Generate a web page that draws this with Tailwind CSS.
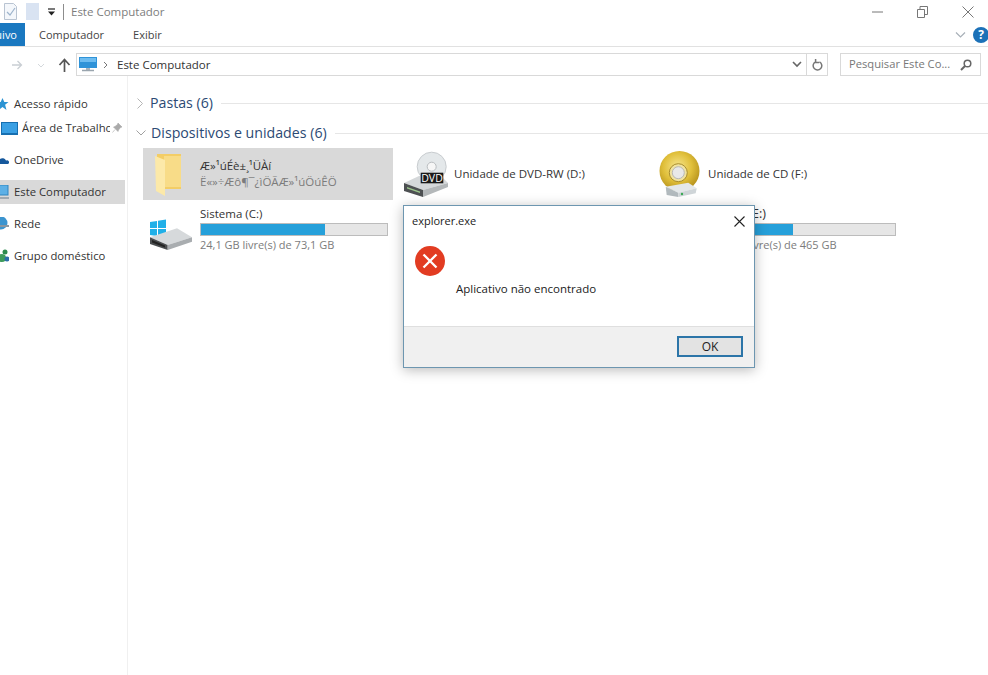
<!DOCTYPE html>
<html lang="pt">
<head>
  <meta charset="UTF-8"/>
  <meta name="viewport" content="width=device-width, initial-scale=1.0"/>
  <title>Este Computador</title>
  <script src="https://cdn.jsdelivr.net/npm/@tailwindcss/browser@4"></script>
</head>
<body class="relative h-[675px] w-[988px] overflow-hidden bg-white font-['Open_Sans',sans-serif] text-[11.5px] text-[#333]">

  <!-- title bar -->
  <header class="flex h-[23px] items-center">
    <svg class="ml-[4px] h-[17px] w-[13px]" viewBox="0 0 13 17"><path d="M.5.500h9l3 3v13H.5z" fill="#f4f7fb" stroke="#b9c4d2"/><path d="M3 9l3 3 5-7" fill="none" stroke="#9db4cc" stroke-width="1.200"/></svg>
    <div class="ml-[9px] h-[17px] w-[13px] bg-[#d9e3f2]"></div>
    <svg class="ml-[8px] h-[8px] w-[9px]" viewBox="0 0 9 8"><path d="M1 1h7" stroke="#222" stroke-width="1.200"/><path d="M1 3.500h7L4.500 7.500z" fill="#222"/></svg>
    <div class="ml-[7px] h-[16px] w-px bg-[#8d8d8d]"></div>
    <span class="ml-[7px] text-[#7d7d7d]">Este Computador</span>
    <div class="ml-auto flex h-full items-center">
      <svg class="h-[12px] w-[12px]" viewBox="0 0 12 12"><path d="M0 6h11" stroke="#777"/></svg>
      <svg class="ml-[33px] h-[12px] w-[12px]" viewBox="0 0 12 12"><path d="M.5 3.500h7v8h-7zM3 3.500v-3h7.500v8h-3" fill="none" stroke="#777"/></svg>
      <svg class="ml-[33px] mr-[14px] h-[12px] w-[12px]" viewBox="0 0 12 12"><path d="M.5.500l11 11M11.500.500l-11 11" stroke="#777"/></svg>
    </div>
  </header>

  <!-- ribbon tabs -->
  <nav class="flex h-[24px] items-center border-b border-[#e1e1e1] text-[11px]">
    <div class="flex h-[23px] w-[25px] items-center justify-end overflow-hidden bg-[#1a78c0] pr-[8px] pt-px text-white">
      <span class="shrink-0">Arquivo</span>
    </div>
    <span class="ml-[14px] pt-px text-[#444]">Computador</span>
    <span class="ml-[29px] pt-px text-[#444]">Exibir</span>
    <svg class="ml-auto h-[8px] w-[11px]" viewBox="0 0 11 8"><path d="M1 1.500l4.500 4.500L10 1.500" fill="none" stroke="#a8b0b8" stroke-width="1.200"/></svg>
    <div class="ml-[7px] mr-[-1px] flex h-[16px] w-[16px] items-center justify-center rounded-full bg-[#1c71b8] text-[12px] font-bold text-white">?</div>
  </nav>

  <!-- address row -->
  <div class="flex h-[29px] items-end">
    <svg class="mb-[5px] ml-[11px] h-[12px] w-[12px]" viewBox="0 0 12 12"><path d="M1 6h9M6.500 2l4 4-4 4" fill="none" stroke="#c9ced3" stroke-width="1.300"/></svg>
    <svg class="mb-[8px] ml-[14px] h-[5px] w-[8px]" viewBox="0 0 8 5"><path d="M1 1l3 3 3-3" fill="none" stroke="#d4d8dc"/></svg>
    <svg class="mb-[4px] ml-[13px] h-[14px] w-[13px]" viewBox="0 0 13 14"><path d="M6.500 14V2M1.500 7l5-5.500 5 5.500" fill="none" stroke="#555" stroke-width="1.700"/></svg>
    <div class="ml-[5px] flex h-[23px] w-[752px] items-center border border-[#d9d9d9]">
      <svg class="ml-[2px] h-[17px] w-[18px]" viewBox="0 0 18 17"><rect x="0" y="1" width="18" height="11" fill="#2f93d8"/><rect x="1" y="2" width="16" height="4" fill="#6dbcf0"/><path d="M7 12h4v2H7z" fill="#a9b4bd"/><path d="M3 14.500h12" stroke="#9aa5ae" stroke-width="1.500"/></svg>
      <svg class="ml-[6px] h-[8px] w-[5px]" viewBox="0 0 5 8"><path d="M1 1l3 3-3 3" fill="none" stroke="#777"/></svg>
      <span class="ml-[9px] text-[#333]">Este Computador</span>
      <svg class="ml-auto mr-[4px] h-[7px] w-[10px]" viewBox="0 0 10 7"><path d="M1 1l4 4 4-4" fill="none" stroke="#666" stroke-width="1.600"/></svg>
      <div class="flex h-full w-[21px] items-center justify-center border-l border-[#d9d9d9]">
        <svg class="h-[12px] w-[11px]" viewBox="0 0 11 12"><path d="M7.500 2.800a4.300 4.300 0 1 1-3.600-.2M3.600 0v3.500h3.500" fill="none" stroke="#777" stroke-width="1.500"/></svg>
      </div>
    </div>
    <div class="ml-[12px] flex h-[23px] w-[141px] items-center justify-between border border-[#d9d9d9] pl-[8px] pr-[8px] text-[11.2px] text-[#777]">
      <span>Pesquisar Este Co...</span>
      <svg class="h-[12px] w-[12px]" viewBox="0 0 12 12"><circle cx="7.500" cy="4.500" r="3.300" fill="none" stroke="#666" stroke-width="1.500"/><path d="M5 7l-4 4" stroke="#666" stroke-width="2"/></svg>
    </div>
  </div>

  <div class="flex h-[599px]">
    <!-- sidebar -->
    <aside class="w-[128px] shrink-0 border-r border-[#f0f0f0] pr-[2px] pt-[16px] text-[11.3px]">
      <div class="flex h-[24px] items-center gap-[5px] pl-[1px]">
        <svg class="ml-[-5px] h-[12px] w-[13px]" viewBox="0 0 12 12"><path d="M6 0l1.800 4H12L8.600 6.800 10 12 6 9 2 12l1.400-5.200L0 4h4.200z" fill="#2b93d3"/></svg>
        <span>Acesso rápido</span>
      </div>
      <div class="flex h-[24px] items-center pl-[1px]">
        <svg class="h-[13px] w-[17px] shrink-0" viewBox="0 0 17 13"><rect width="17" height="13" fill="#176fb0"/><rect x="1" y="1" width="15" height="10" fill="#3aa0e4"/></svg>
        <span class="ml-[4px] w-[88px] overflow-hidden whitespace-nowrap">Área de Trabalho</span>
        <svg class="ml-[2px] h-[10px] w-[10px]" viewBox="0 0 10 10"><path d="M6 0l4 4-1.500.5L6.500 7 6 8.500 1.500 4 3 3.500 5.500 1.500zM3 6.500L.5 9.500" fill="#aaa" stroke="#aaa" stroke-width=".6"/></svg>
      </div>
      <div class="mt-[8px] flex h-[24px] items-center">
        <svg class="h-[8px] w-[9px]" viewBox="0 0 9 8"><path d="M-4 8a4 3 0 0 1 4-5 4 4 0 0 1 6 1.500A2 2 0 0 1 8 8z" fill="#15589c"/></svg>
        <span class="ml-[5px]">OneDrive</span>
      </div>
      <div class="mt-[8px] flex h-[24px] items-center bg-[#d9d9d9]">
        <svg class="h-[15px] w-[9px]" viewBox="0 0 9 15"><rect x="-4" y="0" width="12" height="10" fill="#5db0e6" stroke="#2f85c0"/><path d="M-2 13h11" stroke="#8d99a3" stroke-width="1.500"/></svg>
        <span class="ml-[5px]">Este Computador</span>
      </div>
      <div class="mt-[8px] flex h-[24px] items-center">
        <svg class="h-[14px] w-[9px]" viewBox="0 0 9 14"><circle cx="1" cy="6" r="6.500" fill="#3b94cf"/><path d="M-4 9h13" stroke="#8a96a0" stroke-width="2"/></svg>
        <span class="ml-[5px]">Rede</span>
      </div>
      <div class="mt-[8px] flex h-[24px] items-center">
        <svg class="h-[14px] w-[9px]" viewBox="0 0 9 14"><circle cx="5" cy="3" r="2.500" fill="#2d8a4e"/><circle cx="2" cy="9" r="4" fill="#3f9b5c"/><circle cx="7" cy="10" r="2.500" fill="#2b6ea8"/></svg>
        <span class="ml-[5px]">Grupo doméstico</span>
      </div>
    </aside>

    <!-- content -->
    <main class="min-w-0 flex-1 pt-[14px]">
      <div class="flex h-[26px] items-center">
        <svg class="ml-[9px] h-[11px] w-[6px]" viewBox="0 0 6 11"><path d="M.5.500l5 5-5 5" fill="none" stroke="#b5b5b5"/></svg>
        <span class="ml-[7px] text-[14.200px] text-[#2c4a74]">Pastas (6)</span>
        <div class="ml-[8px] h-px flex-1 bg-[#e6e6e6]"></div>
      </div>
      <div class="mt-[4px] flex h-[26px] items-center">
        <svg class="ml-[8px] h-[6px] w-[10px]" viewBox="0 0 10 6"><path d="M.5.500l4.500 4.500L9.500.500" fill="none" stroke="#a0a0a0"/></svg>
        <span class="ml-[5px] text-[14.200px] text-[#2c4a74]">Dispositivos e unidades (6)</span>
        <div class="ml-[8px] h-px flex-1 bg-[#e6e6e6]"></div>
      </div>

      <div class="ml-[15px] mt-[2px] grid grid-cols-[250px_250px_250px] gap-x-[4px] gap-y-[4px]">
        <!-- selected folder -->
        <div class="flex h-[52px] items-center bg-[#d9d9d9]">
          <svg class="ml-[12px] h-[46px] w-[30px] shrink-0" viewBox="0 0 30 46"><path d="M2 3h24v35H2z" fill="#f3cd66"/><path d="M9 5h17v31H9z" fill="#f8dc88"/><path d="M0 5l10 4v36L1 40z" fill="#fce9a9"/></svg>
          <div class="ml-[15px] leading-[16px]">
            <div class="text-[#333]">Æ»¹úÉè±¸¹ÜÀí</div>
            <div class="text-[#7c7c7c]">Ë«»÷Æô¶¯¿ìÖÃÆ»¹úÖúÊÖ</div>
          </div>
        </div>
        <!-- dvd -->
        <div class="flex h-[52px] items-center">
          <svg class="ml-[6px] h-[46px] w-[46px] shrink-0" viewBox="0 0 46 46"><circle cx="28.700" cy="15.700" r="14.500" fill="#e4e8ea" stroke="#c8cccf"/><circle cx="28.700" cy="15.700" r="4.500" fill="#f6f6f6" stroke="#b9bdc0"/><path d="M1 32l15-7h22l7 7-25 7z" fill="#d5d8da"/><path d="M1 32l19 7v7L1 40z" fill="#4d5052"/><path d="M20 39l25-7v4l-25 10z" fill="#b4b8ba"/><path d="M4 36l13 4.500v1.500L4 37.500z" fill="#9bc58c"/><rect x="17.700" y="21.700" width="22.600" height="10.600" fill="#1a1a1a"/><text x="29" y="31" font-size="10.500" text-anchor="middle" fill="#fff">DVD</text></svg>
          <span class="ml-[5px]">Unidade de DVD-RW (D:)</span>
        </div>
        <!-- cd -->
        <div class="flex h-[52px] items-center">
          <svg class="ml-[7px] h-[46px] w-[46px] shrink-0" viewBox="0 0 46 46">
            <defs><radialGradient id="gold" cx="45%" cy="40%" r="60%"><stop offset="0" stop-color="#f7e68e"/><stop offset=".6" stop-color="#e0bf3a"/><stop offset="1" stop-color="#b8941f"/></radialGradient></defs>
            <circle cx="21.500" cy="20" r="20" fill="url(#gold)"/><circle cx="20.300" cy="21.700" r="9" fill="#f0e3a0" stroke="#a98d2c"/><circle cx="20.300" cy="21.700" r="6" fill="#e8e8e8" stroke="#b8b8b8"/>
            <path d="M7.700 35.700l22.600-4 8.400 5.600-18.400 4.400z" fill="#e4e8ea"/><path d="M7.700 35.700l12.600 6V46L8.700 44z" fill="#b2babe"/><path d="M20.300 41.700l18.400-4.400-1 5L20.300 46z" fill="#cfd5d8"/><circle cx="24" cy="43" r="1.200" fill="#3caa55"/>
          </svg>
          <span class="ml-[4px]">Unidade de CD (F:)</span>
        </div>
        <!-- system -->
        <div class="flex h-[52px] items-center">
          <svg class="ml-[6px] h-[44px] w-[44px] shrink-0" viewBox="0 0 44 44"><path d="M1 14l7-1v7H1zM9 12.800l8-1.300v8.500H9zM1 21h7v7l-7-1zM9 21h8v8.500l-8-1.300z" fill="#20b0e8"/><path d="M1 29.300l27-9 15 9-24.300 7.700z" fill="#d6d9db"/><path d="M1 29.300l17.700 7.700v5L1 36z" fill="#4a4d4f"/><path d="M3 32l13 5.500v2L3 34.500z" fill="#222"/><path d="M18.700 37L43 29.300v4.400L18.700 42z" fill="#a9adb0"/></svg>
          <div class="mb-[2px] ml-[7px] flex-1 pr-[5px]">
            <div class="leading-[16px]">Sistema (C:)</div>
            <div class="mt-px h-[13px] border border-[#bcbcbc] bg-[#e6e6e6]"><div class="h-full bg-[#26a0da]" style="width:66.500%"></div></div>
            <div class="mt-px text-[11px] leading-[16px] text-[#7c7c7c]">24,1 GB livre(s) de 73,1 GB</div>
          </div>
        </div>
        <div class="h-[52px]"></div>
        <!-- data drive -->
        <div class="flex h-[52px] items-center">
          <div class="mb-[2px] ml-[57px] flex-1 pr-[5px]">
            <div class="text-[12.500px] leading-[16px]">Dados (E:)</div>
            <div class="mt-px h-[13px] border border-[#bcbcbc] bg-[#e6e6e6]"><div class="h-full bg-[#26a0da]" style="width:45%"></div></div>
            <div class="mt-px text-[11px] leading-[16px] text-[#7c7c7c]">208 GB livre(s) de 465 GB</div>
          </div>
        </div>
      </div>
    </main>
  </div>

  <!-- error dialog -->
  <div class="absolute left-[403px] top-[205px] flex h-[163px] w-[352px] flex-col border border-[#6d96b0] bg-white shadow-[0_2px_12px_rgba(0,0,0,0.28)]">
    <div class="flex h-[30px] items-center justify-between pl-[8px] pr-[9px]">
      <span class="text-[11px] text-[#222]">explorer.exe</span>
      <svg class="h-[11px] w-[11px]" viewBox="0 0 11 11"><path d="M.5.500l10 10M10.500.500l-10 10" stroke="#222" stroke-width="1.100"/></svg>
    </div>
    <div class="flex flex-1 pl-[11px] pt-[10px]">
      <svg class="h-[30px] w-[30px] shrink-0" viewBox="0 0 30 30"><circle cx="15" cy="15" r="15" fill="#e23c22"/><path d="M8.500 8.500l13 13M21.500 8.500l-13 13" stroke="#fff" stroke-width="2.300"/></svg>
      <span class="ml-[11px] mt-[34px] text-[#222]">Aplicativo não encontrado</span>
    </div>
    <div class="flex h-[41px] items-center justify-end border-t border-[#dfdfdf] bg-[#f0f0f0] pr-[11px]">
      <button class="mt-[-1px] h-[21px] w-[66px] border-2 border-[#2c75a8] bg-[#e3e3e3] text-[12px] text-[#222]">OK</button>
    </div>
  </div>
</body>
</html>
